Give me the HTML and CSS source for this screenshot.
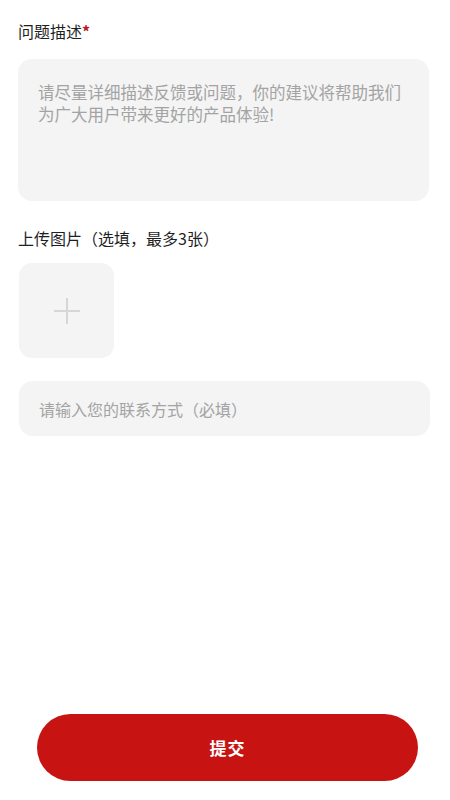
FILE: index.html
```html
<!DOCTYPE html>
<html lang="zh-CN">
<head>
<meta charset="utf-8">
<title>意见反馈</title>
<link rel="stylesheet" href="styles.css">
</head>
<body>
<div class="page">
  <form class="form">
    <div class="label">问题描述<span class="req">*</span></div>
    <textarea class="desc" placeholder="请尽量详细描述反馈或问题，你的建议将帮助我们为广大用户带来更好的产品体验!"></textarea>

    <div class="label upload-label">上传图片（选填，最多3张）</div>
    <div class="upload">
      <svg class="plus" width="28" height="28" viewBox="0 0 28 28">
        <path d="M14 1v26M1 14h26" stroke="#d6d6d6" stroke-width="2" fill="none"/>
      </svg>
    </div>

    <input class="contact" type="text" placeholder="请输入您的联系方式（必填）">
  </form>
  <div class="actions">
    <button class="submit" type="button">提交</button>
  </div>
</div>
</body>
</html>
```

FILE: styles.css
```css
* { box-sizing: border-box; }
html, body {
  margin: 0;
  padding: 0;
  background: #ffffff;
}
body {
  font-family: "Noto Sans CJK SC", "Noto Sans", sans-serif;
  color: #222222;
}
.page {
  min-height: 800px;
  display: flex;
  flex-direction: column;
  padding: 20px 21px 19px 18px;
}
.form {
  display: flex;
  flex-direction: column;
  align-items: flex-start;
}
.label {
  font-size: 16px;
  line-height: 22px;
  color: #1f1f1f;
}
.req {
  color: #b81c1c;
  font-weight: 700;
}
.desc {
  margin-top: 17px;
  width: 100%;
  height: 142px;
  border: none;
  outline: none;
  resize: none;
  background: #f4f4f4;
  border-radius: 14px;
  padding: 22px 20px 0 20px;
  font-family: inherit;
  font-size: 16.5px;
  line-height: 22px;
  color: #333;
  display: block;
}
.desc::placeholder {
  color: #a3a3a3;
}
.upload-label {
  margin-top: 26px;
}
.upload {
  margin-top: 14px;
  margin-left: 1px;
  width: 95px;
  height: 95px;
  border-radius: 13px;
  background: #f4f4f4;
  display: flex;
  align-items: center;
  justify-content: center;
}
.contact {
  margin-top: 23px;
  margin-left: 1px;
  width: 100%;
  height: 55px;
  border: none;
  outline: none;
  background: #f4f4f4;
  border-radius: 14px;
  padding: 0 20px;
  font-family: inherit;
  font-size: 16px;
  color: #333;
  display: block;
}
.contact::placeholder {
  color: #a3a3a3;
}
.actions {
  margin-top: auto;
  display: flex;
  justify-content: center;
  padding-left: 8px;
}
.submit {
  width: 381px;
  height: 67px;
  border: none;
  border-radius: 34px;
  background: #c71311;
  color: #ffffff;
  font-family: inherit;
  font-size: 17px;
  font-weight: 700;
  letter-spacing: 1px;
}
```
